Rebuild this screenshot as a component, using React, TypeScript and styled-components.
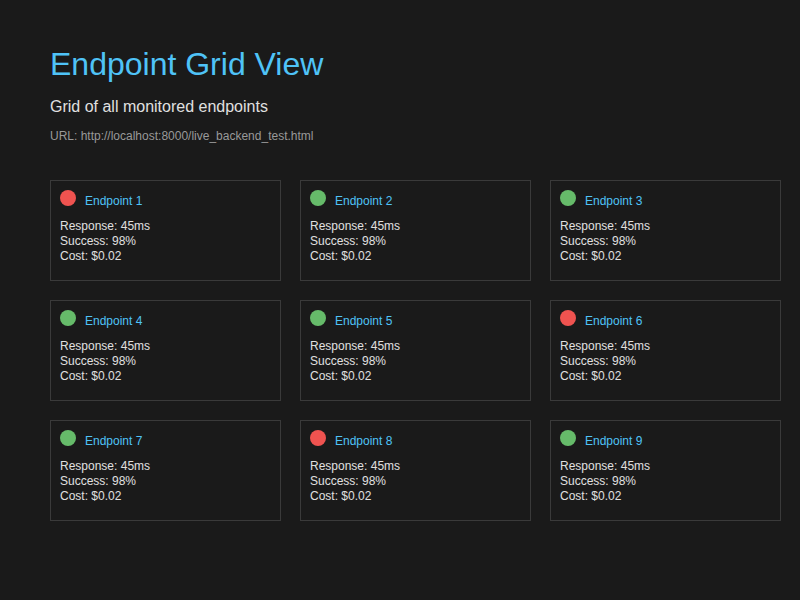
import React from "react";
import styled, { createGlobalStyle } from "styled-components";

const GlobalStyle = createGlobalStyle`
  html, body {
    margin: 0;
    padding: 0;
    background: #1a1a1a;
    font-family: "Liberation Sans", Arial, sans-serif;
  }
`;

type Endpoint = { id: number; up: boolean };

const endpoints: Endpoint[] = [
  { id: 1, up: false },
  { id: 2, up: true },
  { id: 3, up: true },
  { id: 4, up: true },
  { id: 5, up: true },
  { id: 6, up: false },
  { id: 7, up: true },
  { id: 8, up: false },
  { id: 9, up: true },
];

const Page = styled.div`
  padding: 46px 50px 40px;
  min-height: 600px;
  box-sizing: border-box;
  background: #1a1a1a;
`;

const Title = styled.h1`
  margin: 0 0 15px;
  font-size: 32px;
  line-height: 37px;
  font-weight: normal;
  color: #4fc3f7;
`;

const Subtitle = styled.p`
  margin: 0 0 13px;
  font-size: 16px;
  line-height: 18px;
  color: #e0e0e0;
`;

const Url = styled.p`
  margin: 0 0 37px;
  font-size: 12px;
  line-height: 14px;
  color: #999;
`;

const Grid = styled.div`
  display: grid;
  grid-template-columns: repeat(3, 231px);
  gap: 19px;
`;

const Card = styled.div`
  box-sizing: border-box;
  height: 101px;
  padding: 9px;
  border: 1px solid #3a3a3a;
  background: #1a1a1a;
`;

const Header = styled.div`
  display: flex;
  align-items: flex-start;
  gap: 9px;
  margin-bottom: 12px;
`;

const Dot = styled.span<{ $up: boolean }>`
  flex: none;
  width: 16px;
  height: 16px;
  border-radius: 50%;
  background: ${(p) => (p.$up ? "#66bb6a" : "#ef5350")};
`;

const Name = styled.span`
  margin-top: 4px;
  margin-bottom: -1px;
  font-size: 12px;
  line-height: 14px;
  color: #4fc3f7;
`;

const Line = styled.div`
  font-size: 12px;
  line-height: 15px;
  color: #e0e0e0;
`;

export default function App() {
  return (
    <>
      <GlobalStyle />
      <Page>
        <Title>Endpoint Grid View</Title>
        <Subtitle>Grid of all monitored endpoints</Subtitle>
        <Url>URL: http://localhost:8000/live_backend_test.html</Url>
        <Grid>
          {endpoints.map((e) => (
            <Card key={e.id}>
              <Header>
                <Dot $up={e.up} />
                <Name>Endpoint {e.id}</Name>
              </Header>
              <Line>Response: 45ms</Line>
              <Line>Success: 98%</Line>
              <Line>Cost: $0.02</Line>
            </Card>
          ))}
        </Grid>
      </Page>
    </>
  );
}
